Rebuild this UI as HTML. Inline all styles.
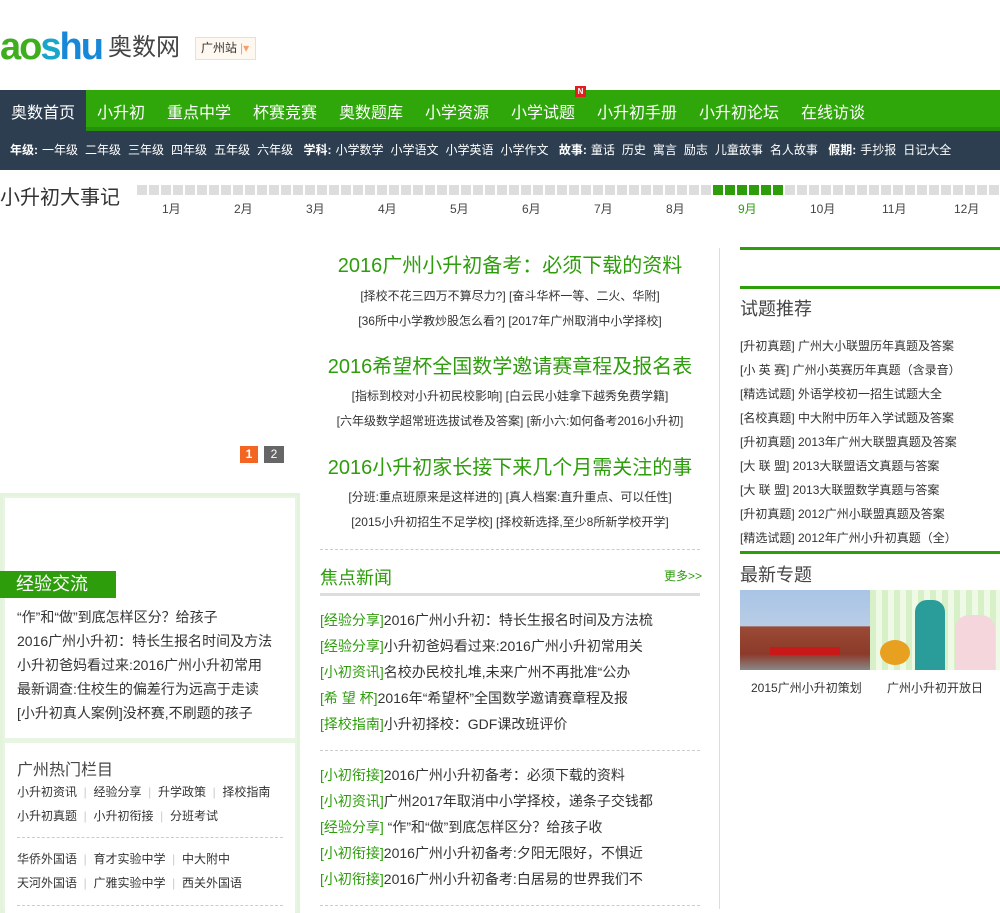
<!DOCTYPE html>
<html><head><meta charset="utf-8"><style>
*{margin:0;padding:0;box-sizing:border-box}
body{width:1000px;height:909px;overflow:hidden;background:#fff;font-family:"Liberation Sans","Noto Sans CJK SC",sans-serif;color:#333;position:relative;font-size:12px}
.a{position:absolute;white-space:nowrap}
.g{color:#2e9d0c}
.nav{position:absolute;top:90px;left:0;width:1000px;height:41px;background:#2fa70a;border-bottom:4px solid #27900a}
.nav span{position:absolute;top:9px;color:#fff;font-size:16px}
.sub{position:absolute;top:131px;left:0;width:1000px;height:39px;background:#2d3e50;color:#fff;font-size:12px;line-height:39px;padding-left:10px;white-space:nowrap}
.sub b{margin-right:4px}
.sub i{font-style:normal;margin-right:7px}
.seg{position:absolute;top:185px;width:10px;height:10px;background:#ddd}
.dash{position:absolute;height:0;border-top:1px dashed #ccc}
.l14{font-size:14px;line-height:24px}
.gl{position:absolute;left:740px;width:260px;height:3px;background:#2e9d0c}
</style></head><body>
<div class="a" style="left:0;top:24px;font-size:38px;font-weight:bold;letter-spacing:-2px;line-height:46px"><span style="color:#3fae1e">ao</span><span style="color:#1aa6c9">s</span><span style="color:#1788d8">hu</span></div>
<div class="a" style="left:108px;top:33px;font-size:24px;color:#444;line-height:30px">奥数网</div>
<div class="a" style="left:195px;top:37px;width:61px;height:23px;border:1px solid #f3dccb;background:#fff8f0;font-size:12px;line-height:21px;padding-left:5px;color:#333">广州站<span style="color:#f5a06a;margin-left:3px">|▾</span></div>
<div class="nav">
<div style="position:absolute;left:0;top:0;width:86px;height:41px;background:#2d3e50"></div>
<span style="left:11px">奥数首页</span><span style="left:97px">小升初</span><span style="left:167px">重点中学</span><span style="left:253px">杯赛竞赛</span><span style="left:339px">奥数题库</span><span style="left:425px">小学资源</span><span style="left:511px">小学试题</span><span style="left:597px">小升初手册</span><span style="left:699px">小升初论坛</span><span style="left:801px">在线访谈</span>
</div>
<div class="a" style="left:575px;top:86px;width:11px;height:11px;background:#e02020;color:#fff;font-size:8px;line-height:11px;text-align:center;font-weight:bold">N</div>
<div class="sub"><b>年级:</b><i>一年级</i><i>二年级</i><i>三年级</i><i>四年级</i><i>五年级</i><i>六年级</i> <b>学科:</b><i>小学数学</i><i>小学语文</i><i>小学英语</i><i>小学作文</i> <b>故事:</b><i>童话</i><i>历史</i><i>寓言</i><i>励志</i><i>儿童故事</i><i>名人故事</i> <b>假期:</b><i>手抄报</i><i>日记大全</i></div>
<div class="a" style="left:0;top:185px;font-size:20px;color:#333;line-height:26px">小升初大事记</div>
<div id="tl"></div>
<script>
var h='';for(var i=0;i<72;i++){var x=137+i*12;var c=(i>=48&&i<54)?'#2e9d0c':'#ddd';h+='<div class="seg" style="left:'+x+'px;background:'+c+'"></div>';}
var m=['1月','2月','3月','4月','5月','6月','7月','8月','9月','10月','11月','12月'];
for(var j=0;j<12;j++){h+='<div class="a" style="top:200px;left:'+(162+j*72)+'px;font-size:12px;color:'+(j==8?'#2e9d0c':'#444')+'">'+m[j]+'</div>';}
document.getElementById('tl').innerHTML=h;
</script>
<div class="a" style="left:240px;top:446px;width:18px;height:17px;background:#f26522;color:#fff;text-align:center;line-height:17px;font-weight:bold">1</div>
<div class="a" style="left:264px;top:446px;width:20px;height:17px;background:#666;color:#fff;text-align:center;line-height:17px">2</div>
<div class="a" style="left:0;top:493px;width:300px;height:420px;border:3px solid #e3f3dc;background:#e8f5e2"></div>
<div class="a" style="left:5px;top:498px;width:290px;height:240px;background:#fff"></div>
<div class="a" style="left:5px;top:743px;width:290px;height:170px;background:#fff"></div>
<div class="a" style="left:0;top:571px;width:116px;height:27px;background:#2e9d0c;color:#fff;font-size:18px;line-height:27px;padding-left:16px">经验交流</div>
<div class="a l14" style="left:17px;top:605px">“作”和“做”到底怎样区分？给孩子<br>2016广州小升初：特长生报名时间及方法<br>小升初爸妈看过来:2016广州小升初常用<br>最新调查:住校生的偏差行为远高于走读<br>[小升初真人案例]没杯赛,不刷题的孩子</div>
<div class="a" style="left:17px;top:756px;font-size:16px;color:#444">广州热门栏目</div>
<div class="a" style="left:17px;top:780px;font-size:12px;line-height:24px">小升初资讯 <span style="color:#ccc">&nbsp;|&nbsp;</span> 经验分享 <span style="color:#ccc">&nbsp;|&nbsp;</span> 升学政策 <span style="color:#ccc">&nbsp;|&nbsp;</span> 择校指南<br>小升初真题 <span style="color:#ccc">&nbsp;|&nbsp;</span> 小升初衔接 <span style="color:#ccc">&nbsp;|&nbsp;</span> 分班考试</div>
<div class="dash" style="left:17px;top:837px;width:266px"></div>
<div class="a" style="left:17px;top:847px;font-size:12px;line-height:24px">华侨外国语 <span style="color:#ccc">&nbsp;|&nbsp;</span> 育才实验中学 <span style="color:#ccc">&nbsp;|&nbsp;</span> 中大附中<br>天河外国语 <span style="color:#ccc">&nbsp;|&nbsp;</span> 广雅实验中学 <span style="color:#ccc">&nbsp;|&nbsp;</span> 西关外国语</div>
<div class="dash" style="left:17px;top:905px;width:266px"></div>
<div class="a" style="left:320px;top:252px;width:380px;text-align:center;font-size:20px;line-height:28px;color:#2e9d0c">2016广州小升初备考：必须下载的资料</div>
<div class="a" style="left:320px;top:284px;width:380px;text-align:center;line-height:25px">[择校不花三四万不算尽力?] [奋斗华杯一等、二火、华附]<br>[36所中小学教炒股怎么看?] [2017年广州取消中小学择校]</div>
<div class="a" style="left:320px;top:353px;width:380px;text-align:center;font-size:20px;line-height:28px;color:#2e9d0c">2016希望杯全国数学邀请赛章程及报名表</div>
<div class="a" style="left:320px;top:384px;width:380px;text-align:center;line-height:25px">[指标到校对小升初民校影响] [白云民小娃拿下越秀免费学籍]<br>[六年级数学超常班选拔试卷及答案] [新小六:如何备考2016小升初]</div>
<div class="a" style="left:320px;top:454px;width:380px;text-align:center;font-size:20px;line-height:28px;color:#2e9d0c">2016小升初家长接下来几个月需关注的事</div>
<div class="a" style="left:320px;top:485px;width:380px;text-align:center;line-height:25px">[分班:重点班原来是这样进的] [真人档案:直升重点、可以任性]<br>[2015小升初招生不足学校] [择校新选择,至少8所新学校开学]</div>
<div class="a" style="left:719px;top:248px;width:1px;height:661px;background:#ddd"></div>
<div class="dash" style="left:320px;top:549px;width:380px"></div>
<div class="a g" style="left:320px;top:564px;font-size:18px">焦点新闻</div>
<div class="a g" style="left:664px;top:567px;font-size:12px">更多&gt;&gt;</div>
<div class="a" style="left:320px;top:593px;width:380px;height:3px;background:#ddd"></div>
<div class="a l14" style="left:320px;top:607px;line-height:26px"><span class="g">[经验分享]</span>2016广州小升初：特长生报名时间及方法梳<br><span class="g">[经验分享]</span>小升初爸妈看过来:2016广州小升初常用关<br><span class="g">[小初资讯]</span>名校办民校扎堆,未来广州不再批准“公办<br><span class="g">[希 望 杯]</span>2016年“希望杯”全国数学邀请赛章程及报<br><span class="g">[择校指南]</span>小升初择校：GDF课改班评价</div>
<div class="dash" style="left:320px;top:750px;width:380px"></div>
<div class="a l14" style="left:320px;top:762px;line-height:26px"><span class="g">[小初衔接]</span>2016广州小升初备考：必须下载的资料<br><span class="g">[小初资讯]</span>广州2017年取消中小学择校，递条子交钱都<br><span class="g">[经验分享]</span> “作”和“做”到底怎样区分？给孩子收<br><span class="g">[小初衔接]</span>2016广州小升初备考:夕阳无限好，不惧近<br><span class="g">[小初衔接]</span>2016广州小升初备考:白居易的世界我们不</div>
<div class="dash" style="left:320px;top:905px;width:380px"></div>
<div class="gl" style="top:247px"></div>
<div class="gl" style="top:286px"></div>
<div class="a" style="left:740px;top:295px;font-size:18px;color:#444">试题推荐</div>
<div class="a" style="left:740px;top:334px;font-size:12px;line-height:24px">[升初真题] 广州大小联盟历年真题及答案<br>[小 英 赛] 广州小英赛历年真题（含录音）<br>[精选试题] 外语学校初一招生试题大全<br>[名校真题] 中大附中历年入学试题及答案<br>[升初真题] 2013年广州大联盟真题及答案<br>[大 联 盟] 2013大联盟语文真题与答案<br>[大 联 盟] 2013大联盟数学真题与答案<br>[升初真题] 2012广州小联盟真题及答案<br>[精选试题] 2012年广州小升初真题（全）</div>
<div class="gl" style="top:551px"></div>
<div class="a" style="left:740px;top:561px;font-size:18px;color:#444">最新专题</div>
<div class="a" style="left:740px;top:590px;width:130px;height:80px;background:linear-gradient(#a9c4e6 0,#b8cde6 45%,#9a4a36 46%,#8c3a2a 80%,#888 100%)"></div>
<div class="a" style="left:770px;top:647px;width:70px;height:8px;background:#c81818"></div>
<div class="a" style="left:870px;top:590px;width:130px;height:80px;background:repeating-linear-gradient(90deg,#d8f0c8 0 6px,#eef9e6 6px 12px)"></div>
<div class="a" style="left:915px;top:600px;width:30px;height:70px;background:#2a9c9a;border-radius:12px 12px 0 0"></div>
<div class="a" style="left:955px;top:615px;width:40px;height:55px;background:#f4d6dc;border-radius:14px 14px 0 0"></div>
<div class="a" style="left:880px;top:640px;width:30px;height:25px;background:#e8a020;border-radius:50%"></div>
<div class="a" style="left:751px;top:679px;font-size:12px">2015广州小升初策划</div>
<div class="a" style="left:887px;top:679px;font-size:12px">广州小升初开放日</div>
</body></html>
